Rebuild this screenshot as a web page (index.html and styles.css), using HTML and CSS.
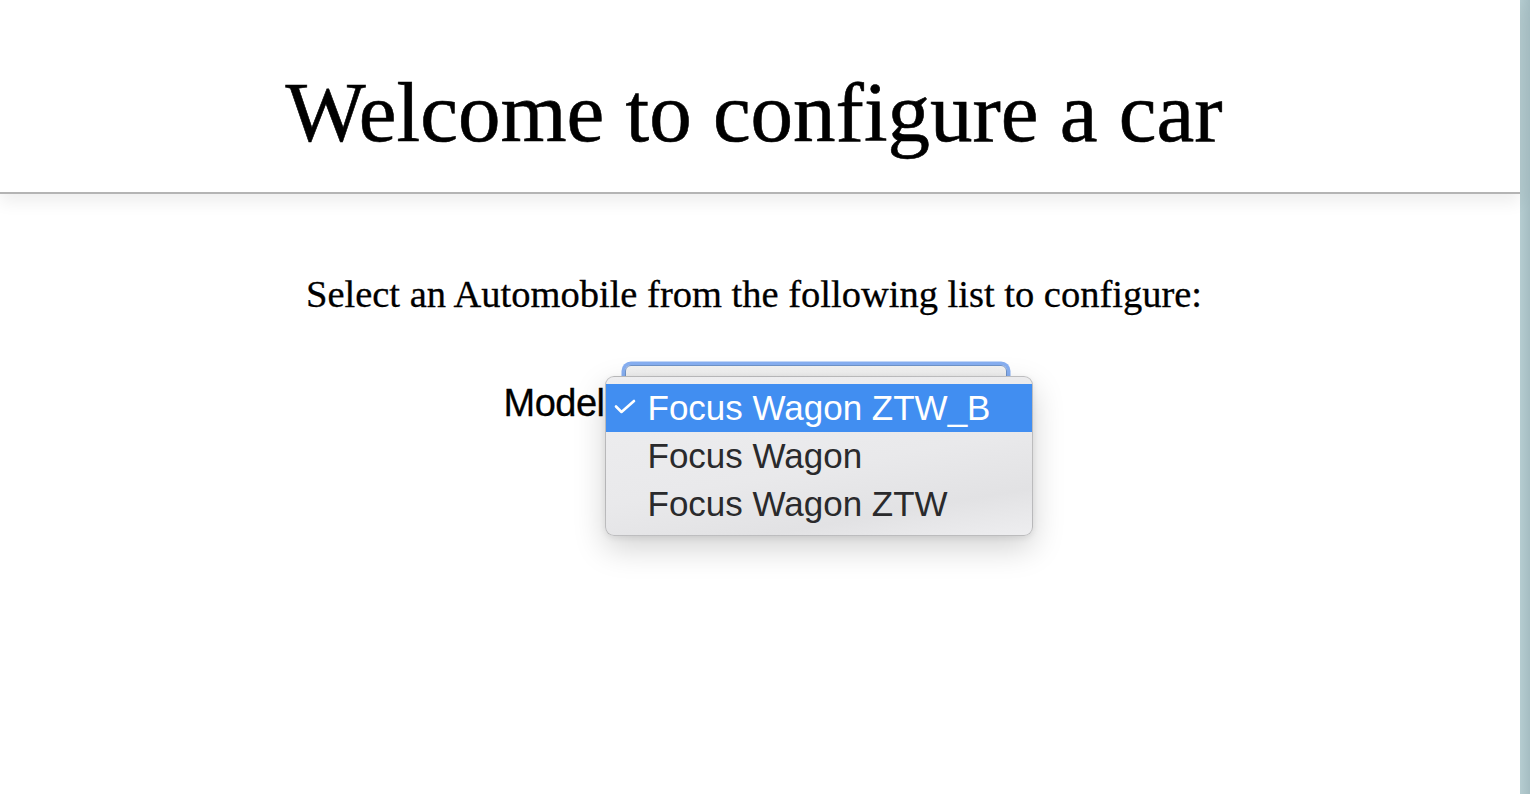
FILE: index.html
```html
<!DOCTYPE html>
<html lang="en">
<head>
<meta charset="utf-8">
<title>Configure a car</title>
<link rel="stylesheet" href="styles.css">
</head>
<body>
<div class="page">
  <header class="header">
    <h1 class="title">Welcome to configure a car</h1>
  </header>
  <main class="content">
    <p class="intro">Select an Automobile from the following list to configure:</p>
    <div class="row">
      <label class="label">Model</label>
      <div class="select-wrap">
        <div class="select"></div>
        <ul class="menu">
          <li class="option selected">
            <svg class="check" width="22" height="16" viewBox="0 0 22 16"><polyline points="2,7.5 7.5,13 20,2" fill="none" stroke="#fff" stroke-width="2.6" stroke-linecap="round" stroke-linejoin="round"/></svg>
            <span>Focus Wagon ZTW_B</span>
          </li>
          <li class="option"><span>Focus Wagon</span></li>
          <li class="option"><span>Focus Wagon ZTW</span></li>
        </ul>
      </div>
    </div>
  </main>
</div>
<div class="edge"></div>
</body>
</html>
```
FILE: styles.css
```css
html, body {
  margin: 0;
  padding: 0;
  height: 100%;
}
body {
  display: flex;
  background: #fff;
  overflow: hidden;
}
.page {
  flex: 1;
  min-width: 0;
  background: #fff;
}
.edge {
  width: 10px;
  flex: none;
  background: linear-gradient(to right, #b5ccd0, #a5bdc2);
}
.header {
  padding-top: 63px;
  height: 129px;
  border-bottom: 2px solid #b4b4b4;
  box-shadow: 0 8px 16px rgba(0, 0, 0, 0.07);
  position: relative;
}
.title {
  margin: 0;
  padding-right: 12px;
  text-align: center;
  font-family: "Liberation Serif", serif;
  font-weight: normal;
  font-size: 85px;
  line-height: normal;
  color: #000;
  -webkit-text-stroke: 0.6px #000;
}
.content {
  padding-top: 78px;
  padding-right: 12px;
}
.intro {
  margin: 0;
  text-align: center;
  font-family: "Liberation Serif", serif;
  font-size: 38.5px;
  line-height: normal;
  color: #000;
  -webkit-text-stroke: 0.3px #000;
}
.row {
  margin-top: 49px;
  display: flex;
  justify-content: center;
  align-items: flex-start;
  gap: 20px;
  padding-left: 2px;
}
.label {
  margin-top: 17px;
  font-family: "Liberation Sans", sans-serif;
  font-size: 38px;
  line-height: normal;
  color: #000;
  letter-spacing: -0.5px;
  -webkit-text-stroke: 0.3px #000;
}
.select-wrap {
  position: relative;
  width: 382px;
  height: 50px;
}
.select {
  box-sizing: border-box;
  width: 382px;
  height: 50px;
  border: 1px solid #6f93c8;
  border-radius: 6px;
  background: linear-gradient(#f2f2f2, #e6e6e6);
  box-shadow: 0 0 0 3.5px rgba(105, 155, 238, 0.8);
}
.menu {
  position: absolute;
  left: -20px;
  top: 11px;
  box-sizing: border-box;
  width: 428px;
  height: 160px;
  margin: 0;
  padding: 7px 0;
  list-style: none;
  background: linear-gradient(170deg, #eeeef0 0%, #e9e9eb 55%, #e2e2e4 80%, #eeeef0 100%);
  border: 1px solid rgba(0, 0, 0, 0.2);
  border-radius: 9px;
  box-shadow: 0 12px 32px rgba(0, 0, 0, 0.18), 0 2px 6px rgba(0, 0, 0, 0.08);
  z-index: 2;
}
.option {
  position: relative;
  height: 48px;
  line-height: 48px;
  padding-left: 42px;
  font-family: "Liberation Sans", sans-serif;
  font-size: 35px;
  color: #2a2a2c;
  white-space: nowrap;
}
.option.selected {
  background: #418ef1;
  color: #fff;
}
.check {
  position: absolute;
  left: 8px;
  top: 15px;
}
```
